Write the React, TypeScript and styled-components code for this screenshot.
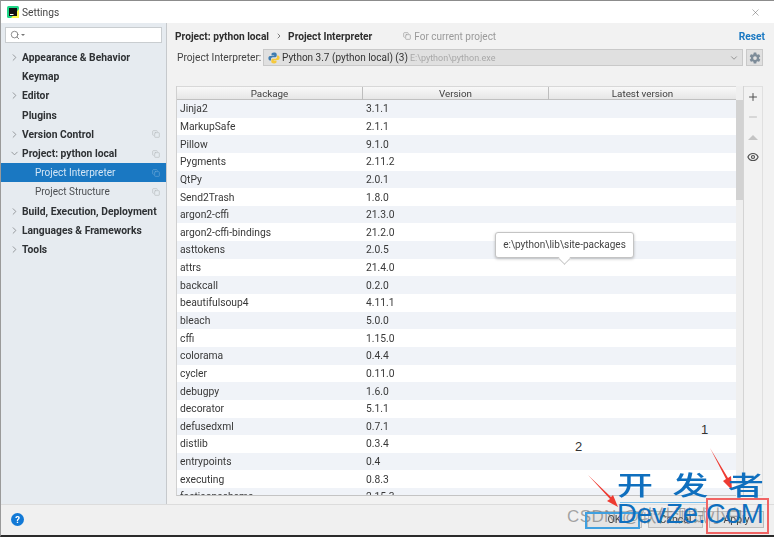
import styled, { createGlobalStyle } from 'styled-components';
import { ChevronDown, ChevronRight, Copy, Eye, Minus, Plus, Search, X } from 'lucide-react';
import { IoSettingsSharp } from 'react-icons/io5';

const uiFont = `Roboto, "Noto Sans", "Liberation Sans", sans-serif`;

const GlobalStyle = createGlobalStyle`
  html, body {
    margin: 0;
    padding: 0;
    width: 774px;
    height: 537px;
    overflow: hidden;
    background: #f2f2f2;
  }
  * { box-sizing: border-box; }
`;

const Page = styled.div`
  position: relative;
  width: 774px;
  height: 537px;
  overflow: hidden;
  font-family: ${uiFont};
  color: #303030;
`;

const Frame = styled.div`
  width: 774px;
  height: 537px;
  display: flex;
  flex-direction: column;
  border-top: 1px solid #8c8c8c;
  border-left: 1px solid #9a9a9a;
  border-bottom: 2px solid #2a2a2a;
  filter: blur(0.3px);
`;

const TitleBar = styled.div`
  height: 22px;
  flex: none;
  background: #fff;
  display: flex;
  align-items: center;
  padding: 0 13px 0 6px;
  gap: 3px;
  font-size: 10.2px;
  color: #444;
`;

const TitleText = styled.span`
  flex: 1;
`;

const Body = styled.div`
  flex: 1;
  display: flex;
  min-height: 0;
`;

const Sidebar = styled.div`
  width: 166px;
  flex: none;
  background: #e6ebf0;
  border-right: 1px solid #c6c9cc;
  padding-top: 4px;
`;

const SearchBox = styled.div`
  height: 16px;
  margin: 0 4px 5px 4px;
  background: #fff;
  border: 1px solid #c9cdd0;
  display: flex;
  align-items: center;
  padding-left: 4px;
  gap: 1px;
  color: #777;
`;

const Caret = styled.span`
  width: 0;
  height: 0;
  border-left: 2px solid transparent;
  border-right: 2px solid transparent;
  border-top: 2px solid #777;
`;

const NavRow = styled.div<{ $selected?: boolean; $child?: boolean }>`
  height: 19.2px;
  display: flex;
  align-items: center;
  padding-left: ${p => (p.$child ? '34px' : '8px')};
  padding-right: 6px;
  font-size: ${p => (p.$child ? '10px' : '10.3px')};
  font-weight: ${p => (p.$child ? 400 : 700)};
  background: ${p => (p.$selected ? '#1a78c2' : 'transparent')};
  color: ${p => (p.$selected ? '#d4e6f5' : p.$child ? '#4c4f52' : '#2e3134')};
`;

const NavArrow = styled.span`
  width: 13px;
  flex: none;
  display: flex;
  align-items: center;
  color: #8e9295;
`;

const NavLabel = styled.span`
  flex: 1;
  white-space: nowrap;
`;

const NavCopy = styled.span<{ $selected?: boolean }>`
  display: flex;
  color: ${p => (p.$selected ? '#6aa6d6' : '#b8bcc0')};
`;

const Main = styled.div`
  flex: 1;
  min-width: 0;
  background: #f2f2f2;
  padding: 0 9px 0 8px;
  display: flex;
  flex-direction: column;
`;

const Crumbs = styled.div`
  height: 26px;
  flex: none;
  display: flex;
  align-items: center;
  font-size: 10.2px;
  font-weight: 700;
  color: #2e2e2e;
`;

const CrumbArrow = styled.span`
  display: flex;
  margin: 0 5px 0 6px;
  color: #666;
`;

const ScopeNote = styled.span`
  display: flex;
  align-items: center;
  gap: 3px;
  margin-left: 31px;
  font-size: 10px;
  font-weight: 400;
  color: #9a9a9a;
  flex: 1;
`;

const ResetLink = styled.span`
  color: #1a78c2;
  font-weight: 700;
`;

const InterpreterRow = styled.div`
  height: 17px;
  flex: none;
  display: flex;
  align-items: center;
  padding-left: 2px;
  font-size: 10.2px;
  color: #444;
  margin-bottom: 20px;
`;

const InterpreterLabel = styled.span`
  width: 86px;
  flex: none;
  white-space: nowrap;
`;

const Combo = styled.div`
  width: 480px;
  height: 17px;
  flex: none;
  background: #e0e0e0;
  border: 1px solid #c9c9c9;
  display: flex;
  align-items: center;
  padding: 0 3px 0 4px;
  gap: 2px;
`;

const ComboMain = styled.span`
  color: #333;
  font-size: 10px;
  white-space: nowrap;
`;

const ComboPath = styled.span`
  flex: 1;
  color: #a8a8a8;
  font-size: 9px;
  white-space: nowrap;
`;

const GearButton = styled.div`
  width: 17px;
  height: 17px;
  flex: none;
  margin-left: 3px;
  background: #e0e0e0;
  border: 1px solid #c9c9c9;
  display: flex;
  align-items: center;
  justify-content: center;
  color: #7d8c99;
`;

const TableArea = styled.div`
  height: 410px;
  flex: none;
  display: flex;
  margin-left: 1px;
`;

const Table = styled.div`
  width: 560px;
  flex: none;
  overflow: hidden;
  border-left: 1px solid #d0d0d0;
  border-bottom: 1px solid #c4c4c4;
`;

const HeaderRow = styled.div`
  height: 14px;
  display: grid;
  grid-template-columns: 186px 186px 187px;
  background: linear-gradient(#f8f8f8, #e6e6e6);
  border-top: 1px solid #d8d8d8;
  border-bottom: 1px solid #c0c0c0;
`;

const HeaderCell = styled.div`
  text-align: center;
  font-size: 9.8px;
  line-height: 13px;
  color: #404040;
  border-right: 1px solid #bdbdbd;
  &:last-child { border-right: 0; }
`;

const DataRow = styled.div<{ $odd: boolean }>`
  height: 17.65px;
  display: grid;
  grid-template-columns: 186px 186px 187px;
  align-items: center;
  background: ${p => (p.$odd ? '#f0f3f8' : '#fff')};
  font-size: 10.3px;
  color: #383838;
`;

const DataCell = styled.div`
  padding-left: 3px;
  white-space: nowrap;
`;

const ScrollTrack = styled.div`
  width: 8px;
  flex: none;
  padding-top: 14px;
  background: #efefef;
  border-right: 1px solid #d4d4d4;
`;

const ScrollThumb = styled.div`
  height: 100px;
  background: #d2d2d2;
`;

const ToolStrip = styled.div`
  width: 19px;
  flex: none;
  border: 1px solid #e0e0e0;
  border-left: 0;
  display: flex;
  flex-direction: column;
  align-items: center;
  padding-top: 4px;
  gap: 8px;
`;

const Tool = styled.span<{ $muted?: boolean }>`
  height: 12px;
  display: flex;
  align-items: center;
  justify-content: center;
  color: ${p => (p.$muted ? '#bcbcbc' : '#505050')};
`;

const UpTriangle = styled.span`
  width: 0;
  height: 0;
  border-left: 5px solid transparent;
  border-right: 5px solid transparent;
  border-bottom: 5px solid #c4c4c4;
`;

const Footer = styled.div`
  height: 31px;
  flex: none;
  background: #f0f0f0;
  border-top: 1px solid #dcdcdc;
  display: flex;
  align-items: center;
  padding: 0 10px 2px 10px;
`;

const HelpDot = styled.span`
  width: 13px;
  height: 13px;
  border-radius: 50%;
  background: #1279d6;
  color: #fff;
  font-size: 9.5px;
  font-weight: 700;
  line-height: 13px;
  text-align: center;
  margin-right: auto;
`;

const FootButton = styled.div`
  width: 55px;
  height: 17px;
  margin-left: 6px;
  background: #e4e4e4;
  border: 1px solid #bcbcbc;
  font-size: 10.5px;
  line-height: 15px;
  text-align: center;
  color: #444;
`;

const Tooltip = styled.div`
  position: absolute;
  left: 495px;
  top: 232px;
  width: 139px;
  height: 26px;
  background: #fff;
  border: 1px solid #c4c4c4;
  border-radius: 3px;
  box-shadow: 0 1px 3px rgba(0, 0, 0, 0.25);
  font-size: 10px;
  line-height: 24px;
  text-align: center;
  color: #444;
  filter: blur(0.3px);
  &::after {
    content: '';
    position: absolute;
    left: 64px;
    top: 21px;
    width: 8px;
    height: 8px;
    background: #fff;
    border-right: 1px solid #c8c8c8;
    border-bottom: 1px solid #c8c8c8;
    transform: rotate(45deg);
  }
`;

const Mark = styled.span<{ $x: number; $y: number }>`
  position: absolute;
  left: ${p => p.$x}px;
  top: ${p => p.$y}px;
  font-family: "Liberation Sans", sans-serif;
  font-size: 13px;
  line-height: 15px;
  color: #333;
`;

const Box = styled.div<{ $x: number; $y: number; $w: number; $h: number; $color: string }>`
  position: absolute;
  left: ${p => p.$x}px;
  top: ${p => p.$y}px;
  width: ${p => p.$w}px;
  height: ${p => p.$h}px;
  border: 2px solid ${p => p.$color};
`;

const BlueRule = styled.div`
  position: absolute;
  left: 620px;
  top: 502px;
  width: 86px;
  height: 1px;
  background: #7cc0ec;
`;

const ArrowLayer = styled.svg`
  position: absolute;
  left: 0;
  top: 0;
  pointer-events: none;
`;

const CsdnMark = styled.span`
  position: absolute;
  left: 567px;
  top: 506px;
  font-family: "Liberation Sans", "Noto Sans CJK SC", sans-serif;
  font-size: 17px;
  line-height: 22px;
  color: rgba(110, 110, 110, 0.6);
  white-space: nowrap;
  letter-spacing: 0.4px;
`;

const BrandCjk = styled.div`
  position: absolute;
  left: 617px;
  top: 468px;
  width: 147px;
  display: flex;
  justify-content: space-between;
  font-family: "Noto Sans CJK SC", sans-serif;
  font-size: 36px;
  font-weight: 500;
  line-height: 40px;
  color: #0f6fbe;
  transform: scaleY(0.74);
  transform-origin: top;
`;

const BrandLatin = styled.div`
  position: absolute;
  left: 617px;
  top: 499px;
  font-family: "Liberation Sans", sans-serif;
  font-size: 27.5px;
  line-height: 30px;
  color: #0f6fbe;
  white-space: nowrap;
`;

const navItems = [
  { label: 'Appearance & Behavior', arrow: 'right' },
  { label: 'Keymap' },
  { label: 'Editor', arrow: 'right' },
  { label: 'Plugins' },
  { label: 'Version Control', arrow: 'right', copy: true },
  { label: 'Project: python local', arrow: 'down', copy: true },
  { label: 'Project Interpreter', child: true, selected: true, copy: true },
  { label: 'Project Structure', child: true, copy: true },
  { label: 'Build, Execution, Deployment', arrow: 'right' },
  { label: 'Languages & Frameworks', arrow: 'right' },
  { label: 'Tools', arrow: 'right' },
];

const packages = [
  ['Jinja2', '3.1.1'],
  ['MarkupSafe', '2.1.1'],
  ['Pillow', '9.1.0'],
  ['Pygments', '2.11.2'],
  ['QtPy', '2.0.1'],
  ['Send2Trash', '1.8.0'],
  ['argon2-cffi', '21.3.0'],
  ['argon2-cffi-bindings', '21.2.0'],
  ['asttokens', '2.0.5'],
  ['attrs', '21.4.0'],
  ['backcall', '0.2.0'],
  ['beautifulsoup4', '4.11.1'],
  ['bleach', '5.0.0'],
  ['cffi', '1.15.0'],
  ['colorama', '0.4.4'],
  ['cycler', '0.11.0'],
  ['debugpy', '1.6.0'],
  ['decorator', '5.1.1'],
  ['defusedxml', '0.7.1'],
  ['distlib', '0.3.4'],
  ['entrypoints', '0.4'],
  ['executing', '0.8.3'],
  ['fastjsonschema', '2.15.3'],
];

function PyCharmIcon() {
  return (
    <svg width="12" height="12" viewBox="0 0 12 12">
      <rect width="12" height="12" rx="1.5" fill="#21d789" />
      <path d="M12 3v9H4z" fill="#fcf84a" />
      <rect x="2" y="2" width="8" height="8" fill="#111" />
      <rect x="3" y="8" width="3.5" height="1" fill="#fff" />
    </svg>
  );
}

function PythonIcon() {
  return (
    <svg width="12" height="12" viewBox="0 0 12 12">
      <path d="M6 .5C4 .5 3.5 1.3 3.5 2.2V3.5H6.2V4H2C.9 4 .4 5 .4 6.2S.9 8.5 2 8.5h1V7c0-1 .8-1.8 1.8-1.8h2.5c.8 0 1.4-.6 1.4-1.4V2.2C8.7 1.2 7.7.5 6 .5z" fill="#3f7cb0" />
      <path d="M6 11.5c2 0 2.5-.8 2.5-1.7V8.5H5.8V8H10c1.1 0 1.6-1 1.6-2.2S11.1 3.5 10 3.5H9V5c0 1-.8 1.8-1.8 1.8H4.7c-.8 0-1.4.6-1.4 1.4v1.6c0 1 1 1.7 2.7 1.7z" fill="#f5c93c" />
    </svg>
  );
}

export default function App() {
  return (
    <Page>
      <GlobalStyle />
      <Frame>
        <TitleBar>
          <PyCharmIcon />
          <TitleText>Settings</TitleText>
          <X size={11} strokeWidth={1} color="#555" />
        </TitleBar>
        <Body>
          <Sidebar>
            <SearchBox>
              <Search size={10} strokeWidth={2} />
              <Caret />
            </SearchBox>
            {navItems.map(item => (
              <NavRow key={item.label} $child={item.child} $selected={item.selected}>
                {!item.child && (
                  <NavArrow>
                    {item.arrow === 'right' && <ChevronRight size={11} strokeWidth={2} />}
                    {item.arrow === 'down' && <ChevronDown size={11} strokeWidth={2} />}
                  </NavArrow>
                )}
                <NavLabel>{item.label}</NavLabel>
                {item.copy && (
                  <NavCopy $selected={item.selected}>
                    <Copy size={8} strokeWidth={2} />
                  </NavCopy>
                )}
              </NavRow>
            ))}
          </Sidebar>
          <Main>
            <Crumbs>
              Project: python local
              <CrumbArrow>
                <ChevronRight size={8} strokeWidth={2.5} />
              </CrumbArrow>
              Project Interpreter
              <ScopeNote>
                <Copy size={8} strokeWidth={2} />
                For current project
              </ScopeNote>
              <ResetLink>Reset</ResetLink>
            </Crumbs>
            <InterpreterRow>
              <InterpreterLabel>Project Interpreter:</InterpreterLabel>
              <Combo>
                <PythonIcon />
                <ComboMain>Python 3.7 (python local) (3)</ComboMain>
                <ComboPath>E:\python\python.exe</ComboPath>
                <ChevronDown size={10} strokeWidth={1.5} color="#666" />
              </Combo>
              <GearButton>
                <IoSettingsSharp size={12} />
              </GearButton>
            </InterpreterRow>
            <TableArea>
              <Table>
                <HeaderRow>
                  <HeaderCell>Package</HeaderCell>
                  <HeaderCell>Version</HeaderCell>
                  <HeaderCell>Latest version</HeaderCell>
                </HeaderRow>
                {packages.map(([name, version], i) => (
                  <DataRow key={name} $odd={i % 2 === 0}>
                    <DataCell>{name}</DataCell>
                    <DataCell>{version}</DataCell>
                    <DataCell />
                  </DataRow>
                ))}
              </Table>
              <ScrollTrack>
                <ScrollThumb />
              </ScrollTrack>
              <ToolStrip>
                <Tool><Plus size={12} strokeWidth={2} /></Tool>
                <Tool $muted><Minus size={12} strokeWidth={2} /></Tool>
                <Tool><UpTriangle /></Tool>
                <Tool><Eye size={12} strokeWidth={2.4} /></Tool>
              </ToolStrip>
            </TableArea>
          </Main>
        </Body>
        <Footer>
          <HelpDot>?</HelpDot>
          <FootButton>OK</FootButton>
          <FootButton>Cancel</FootButton>
          <FootButton>Apply</FootButton>
        </Footer>
      </Frame>

      <Tooltip>e:\python\lib\site-packages</Tooltip>
      <Mark $x={701} $y={422}>1</Mark>
      <Mark $x={575} $y={439}>2</Mark>
      <ArrowLayer width="774" height="537" viewBox="0 0 774 537">
        <path d="M710 448L726 479L723 481L732 490L731 476L728 478Z" fill="#ee3b32" />
        <path d="M588 475L610 499L607 501L618 507L613 495L611 497Z" fill="#ee3b32" />
      </ArrowLayer>
      <CsdnMark>CSDN @软件测试小白</CsdnMark>
      <BlueRule />
      <Box $x={585} $y={512} $w={55} $h={17} $color="#3fa0e0" />
      <Box $x={706} $y={498} $w={63} $h={36} $color="#f06464" />
      <BrandCjk>
        <span>开</span>
        <span>发</span>
        <span>者</span>
      </BrandCjk>
      <BrandLatin>DevZe.CoM</BrandLatin>
    </Page>
  );
}
